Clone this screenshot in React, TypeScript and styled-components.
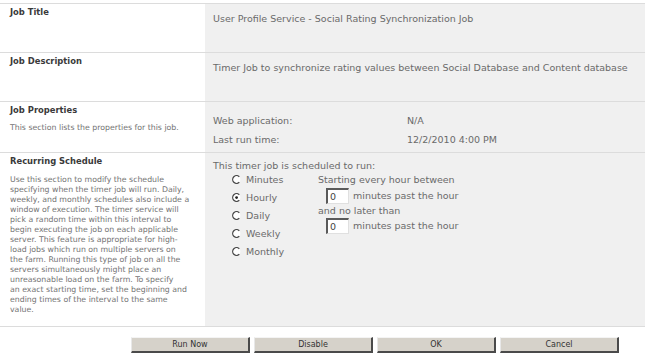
import React from 'react';
import styled, { createGlobalStyle } from 'styled-components';

const GlobalStyle = createGlobalStyle`
  body {
    margin: 0;
    background: #ffffff;
    font-family: "DejaVu Sans", Verdana, sans-serif;
    font-size: 9.5px;
    color: #6a6a6a;
  }
`;

const Page = styled.div`
  width: 645px;
  padding-top: 3px;
`;

const Section = styled.div<{ $height: number }>`
  display: grid;
  grid-template-columns: 205px 440px;
  height: ${(p) => p.$height}px;
  border-top: 1px solid #dcdcdc;
`;

const LabelCell = styled.div`
  padding: 3px 10px 0 10px;
  line-height: 10px;
`;

const Heading = styled.div`
  font-weight: bold;
  font-size: 8.4px;
  color: #3a3a3a;
`;

const Description = styled.div<{ $gap?: number }>`
  margin-top: ${(p) => p.$gap ?? 8}px;
  font-size: 7.8px;
  color: #737373;
  width: 180px;
`;

const ValueCell = styled.div<{ $pad?: number }>`
  background: #f0f0f0;
  padding: ${(p) => p.$pad ?? 10}px 8px 0 8px;
  line-height: 10px;
`;

const PropRow = styled.div`
  display: grid;
  grid-template-columns: 194px 1fr;
  height: 19px;
  align-items: center;
`;

const Schedule = styled.div`
  display: flex;
`;

const RadioColumn = styled.div`
  display: flex;
  flex-direction: column;
  width: 86px;
  padding-left: 19px;
`;

const RadioRow = styled.label`
  display: flex;
  align-items: center;
  height: 17.9px;
  gap: 5px;
`;

const HourColumn = styled.div`
  display: flex;
  flex-direction: column;
`;

const TextLine = styled.div<{ $h: number }>`
  height: ${(p) => p.$h}px;
  display: flex;
  align-items: center;
`;

const InputLine = styled.div`
  height: 16px;
  display: flex;
  align-items: center;
  gap: 4px;
  padding-left: 8px;
`;

const MinuteBox = styled.div`
  width: 18px;
  height: 13px;
  background: #ffffff;
  border-top: 2px solid #5a5a5a;
  border-left: 2px solid #5a5a5a;
  border-right: 1px solid #e0e0e0;
  border-bottom: 1px solid #e0e0e0;
  padding-left: 2px;
  line-height: 13px;
  color: #444;
`;

const BottomLine = styled.div`
  border-top: 1px solid #dcdcdc;
`;

const ButtonBar = styled.div`
  display: flex;
  gap: 4px;
  padding: 10px 0 0 131px;
`;

const Button = styled.button`
  width: 119px;
  height: 16px;
  padding: 0;
  background: #d6d2ca;
  border-top: 1px solid #f4f4f4;
  border-left: 1px solid #e8e8e8;
  border-right: 2px solid #4a4a4a;
  border-bottom: 2px solid #4a4a4a;
  font-family: "DejaVu Sans", Verdana, sans-serif;
  font-size: 8px;
  color: #333;
`;

const Radio = ({ checked }: { checked?: boolean }) => (
  <svg width="9" height="9" viewBox="0 0 9 9">
    <circle cx="4.5" cy="4.5" r="3.8" fill="#ffffff" />
    <path d="M7.3 1.7 A3.9 3.9 0 1 0 7.3 7.3" fill="none" stroke="#4a4a4a" strokeWidth="1.3" />
    {checked && <circle cx="4.6" cy="4.6" r="1.4" fill="#1e1e1e" />}
  </svg>
);

const options = ['Minutes', 'Hourly', 'Daily', 'Weekly', 'Monthly'];

const App: React.FC = () => {
  return (
    <>
      <GlobalStyle />
      <Page>
        <Section $height={48}>
          <LabelCell>
            <Heading>Job Title</Heading>
          </LabelCell>
          <ValueCell>User Profile Service - Social Rating Synchronization Job</ValueCell>
        </Section>
        <Section $height={48}>
          <LabelCell>
            <Heading>Job Description</Heading>
          </LabelCell>
          <ValueCell>Timer Job to synchronize rating values between Social Database and Content database</ValueCell>
        </Section>
        <Section $height={50}>
          <LabelCell>
            <Heading>Job Properties</Heading>
            <Description>This section lists the properties for this job.</Description>
          </LabelCell>
          <ValueCell $pad={9}>
            <PropRow>
              <span>Web application:</span>
              <span>N/A</span>
            </PropRow>
            <PropRow>
              <span>Last run time:</span>
              <span>12/2/2010 4:00 PM</span>
            </PropRow>
          </ValueCell>
        </Section>
        <Section $height={173}>
          <LabelCell>
            <Heading>Recurring Schedule</Heading>
            <Description $gap={9}>
              Use this section to modify the schedule specifying when the timer job will run. Daily,
              weekly, and monthly schedules also include a window of execution. The timer service will
              pick a random time within this interval to begin executing the job on each applicable
              server. This feature is appropriate for high-load jobs which run on multiple servers on
              the farm. Running this type of job on all the servers simultaneously might place an
              unreasonable load on the farm. To specify<br />
              an exact starting time, set the beginning and
              ending times of the interval to the same value.
            </Description>
          </LabelCell>
          <ValueCell $pad={8}>
            <div>This timer job is scheduled to run:</div>
            <Schedule>
              <RadioColumn>
                {options.map((o) => (
                  <RadioRow key={o}>
                    <Radio checked={o === 'Hourly'} />
                    <span>{o}</span>
                  </RadioRow>
                ))}
              </RadioColumn>
              <HourColumn>
                <TextLine $h={17}>Starting every hour between</TextLine>
                <InputLine>
                  <MinuteBox>0</MinuteBox>
                  <span>minutes past the hour</span>
                </InputLine>
                <TextLine $h={14}>and no later than</TextLine>
                <InputLine>
                  <MinuteBox>0</MinuteBox>
                  <span>minutes past the hour</span>
                </InputLine>
              </HourColumn>
            </Schedule>
          </ValueCell>
        </Section>
        <BottomLine />
        <ButtonBar>
          <Button>Run Now</Button>
          <Button>Disable</Button>
          <Button>OK</Button>
          <Button>Cancel</Button>
        </ButtonBar>
      </Page>
    </>
  );
};

export default App;
